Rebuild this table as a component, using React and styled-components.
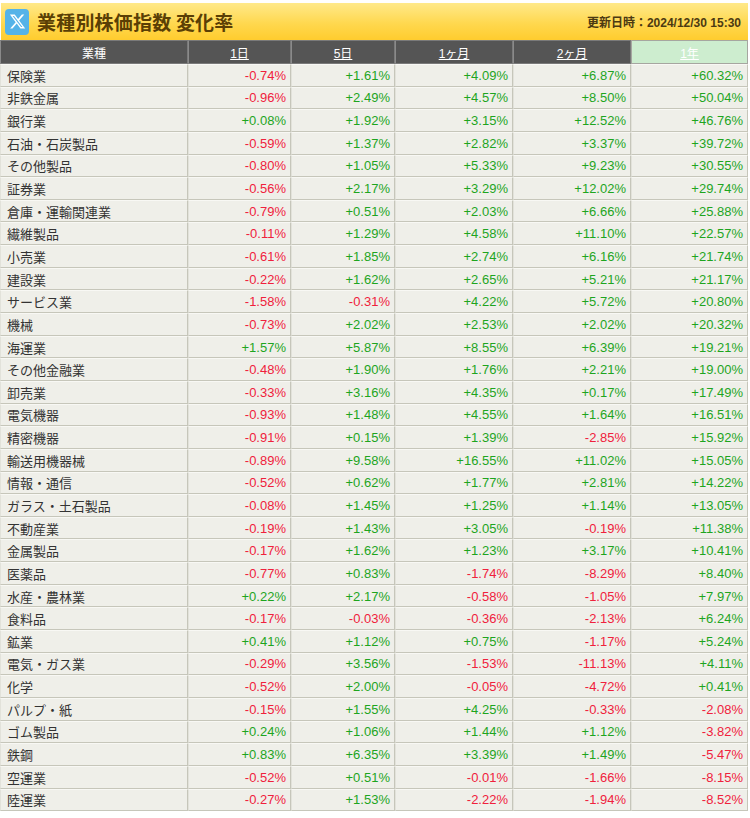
import React from 'react';
import styled, { createGlobalStyle } from 'styled-components';

const GlobalStyle = createGlobalStyle`
  body {
    margin: 0;
    background: #ffffff;
    font-family: "Liberation Sans", "Noto Sans CJK JP", sans-serif;
  }
`;

const COLS = '188px 103px 104px 118px 118px 117px';

const Page = styled.div`
  width: 748px;
  padding-top: 3px;
`;

const Banner = styled.div`
  display: flex;
  align-items: center;
  justify-content: space-between;
  height: 37px;
  margin-left: 1px;
  padding: 0 7px 0 4px;
  background: linear-gradient(#ffe98a, #ffd84f 55%, #ffcc2e);
  box-sizing: border-box;
`;

const TitleGroup = styled.div`
  display: flex;
  align-items: center;
  gap: 8px;
`;

const XBadge = styled.div`
  width: 24px;
  height: 26px;
  border-radius: 4px;
  background: #55b3e8;
  display: flex;
  align-items: center;
  justify-content: center;
`;

const Title = styled.h1`
  margin: 0;
  font-family: "Noto Sans CJK JP", sans-serif;
  font-size: 19px;
  font-weight: 700;
  color: #5a3f05;
  letter-spacing: 0.2px;
`;

const Updated = styled.div`
  font-family: "Liberation Sans", "Noto Sans CJK JP", sans-serif;
  font-size: 12px;
  font-weight: 700;
  color: #4c3a12;
`;

const Row = styled.div`
  display: grid;
  grid-template-columns: ${COLS};
  height: ${p => (p.$head ? '24px' : '22.65px')};
`;

const HeadCell = styled.div`
  display: flex;
  align-items: center;
  justify-content: center;
  background: ${p => (p.$active ? '#cdedcf' : '#555555')};
  border: 1px solid ${p => (p.$active ? '#a6a6a0' : '#7a7a7a')};
  border-left-color: ${p => (p.$active ? '#a6a6a0' : '#8a8a8a')};
  color: #ffffff;
  font-family: "Liberation Sans", "Noto Sans CJK JP", sans-serif;
  font-size: 12px;
  text-decoration: ${p => (p.$sort ? 'underline' : 'none')};
  box-sizing: border-box;
`;

const Cell = styled.div`
  display: flex;
  align-items: center;
  justify-content: ${p => (p.$name ? 'flex-start' : 'flex-end')};
  padding: ${p => (p.$name ? '0 0 0 6px' : '0 4px 0 0')};
  background: #efefe9;
  border-top: 1px solid #f8f8f4;
  border-left: 1px solid #e2e2da;
  border-right: 1px solid #c6c6ba;
  border-bottom: 1px solid #c6c6ba;
  box-sizing: border-box;
  font-family: ${p => (p.$name ? '"Noto Sans CJK JP", sans-serif' : '"Liberation Sans", sans-serif')};
  font-size: 13px;
  color: ${p => (p.$name ? '#333333' : p.$up ? '#1ea51e' : '#f0213c')};
`;

const HEADS = [
  { label: '業種' },
  { label: '1日', sort: true },
  { label: '5日', sort: true },
  { label: '1ヶ月', sort: true },
  { label: '2ヶ月', sort: true },
  { label: '1年', sort: true, active: true },
];

const DATA = [
  ['保険業', '-0.74', '+1.61', '+4.09', '+6.87', '+60.32'],
  ['非鉄金属', '-0.96', '+2.49', '+4.57', '+8.50', '+50.04'],
  ['銀行業', '+0.08', '+1.92', '+3.15', '+12.52', '+46.76'],
  ['石油・石炭製品', '-0.59', '+1.37', '+2.82', '+3.37', '+39.72'],
  ['その他製品', '-0.80', '+1.05', '+5.33', '+9.23', '+30.55'],
  ['証券業', '-0.56', '+2.17', '+3.29', '+12.02', '+29.74'],
  ['倉庫・運輸関連業', '-0.79', '+0.51', '+2.03', '+6.66', '+25.88'],
  ['繊維製品', '-0.11', '+1.29', '+4.58', '+11.10', '+22.57'],
  ['小売業', '-0.61', '+1.85', '+2.74', '+6.16', '+21.74'],
  ['建設業', '-0.22', '+1.62', '+2.65', '+5.21', '+21.17'],
  ['サービス業', '-1.58', '-0.31', '+4.22', '+5.72', '+20.80'],
  ['機械', '-0.73', '+2.02', '+2.53', '+2.02', '+20.32'],
  ['海運業', '+1.57', '+5.87', '+8.55', '+6.39', '+19.21'],
  ['その他金融業', '-0.48', '+1.90', '+1.76', '+2.21', '+19.00'],
  ['卸売業', '-0.33', '+3.16', '+4.35', '+0.17', '+17.49'],
  ['電気機器', '-0.93', '+1.48', '+4.55', '+1.64', '+16.51'],
  ['精密機器', '-0.91', '+0.15', '+1.39', '-2.85', '+15.92'],
  ['輸送用機器械', '-0.89', '+9.58', '+16.55', '+11.02', '+15.05'],
  ['情報・通信', '-0.52', '+0.62', '+1.77', '+2.81', '+14.22'],
  ['ガラス・土石製品', '-0.08', '+1.45', '+1.25', '+1.14', '+13.05'],
  ['不動産業', '-0.19', '+1.43', '+3.05', '-0.19', '+11.38'],
  ['金属製品', '-0.17', '+1.62', '+1.23', '+3.17', '+10.41'],
  ['医薬品', '-0.77', '+0.83', '-1.74', '-8.29', '+8.40'],
  ['水産・農林業', '+0.22', '+2.17', '-0.58', '-1.05', '+7.97'],
  ['食料品', '-0.17', '-0.03', '-0.36', '-2.13', '+6.24'],
  ['鉱業', '+0.41', '+1.12', '+0.75', '-1.17', '+5.24'],
  ['電気・ガス業', '-0.29', '+3.56', '-1.53', '-11.13', '+4.11'],
  ['化学', '-0.52', '+2.00', '-0.05', '-4.72', '+0.41'],
  ['パルプ・紙', '-0.15', '+1.55', '+4.25', '-0.33', '-2.08'],
  ['ゴム製品', '+0.24', '+1.06', '+1.44', '+1.12', '-3.82'],
  ['鉄鋼', '+0.83', '+6.35', '+3.39', '+1.49', '-5.47'],
  ['空運業', '-0.52', '+0.51', '-0.01', '-1.66', '-8.15'],
  ['陸運業', '-0.27', '+1.53', '-2.22', '-1.94', '-8.52'],
];

function XLogo() {
  return (
    <svg width="17" height="17" viewBox="0 0 24 24">
      <path
        fill="#ffffff"
        d="M18.244 2.25h3.308l-7.227 8.26 8.502 11.24H16.17l-5.214-6.817L4.99 21.75H1.68l7.73-8.835L1.254 2.25H8.08l4.713 6.231zm-1.161 17.52h1.833L7.084 4.126H5.117z"
      />
    </svg>
  );
}

export default function App() {
  return (
    <Page>
      <GlobalStyle />
      <Banner>
        <TitleGroup>
          <XBadge><XLogo /></XBadge>
          <Title>業種別株価指数 変化率</Title>
        </TitleGroup>
        <Updated>更新日時：2024/12/30 15:30</Updated>
      </Banner>
      <Row $head>
        {HEADS.map(h => (
          <HeadCell key={h.label} $sort={h.sort} $active={h.active}>{h.label}</HeadCell>
        ))}
      </Row>
      {DATA.map(row => (
        <Row key={row[0]}>
          <Cell $name>{row[0]}</Cell>
          {row.slice(1).map((v, i) => (
            <Cell key={i} $up={v.startsWith('+')}>{v}%</Cell>
          ))}
        </Row>
      ))}
    </Page>
  );
}
